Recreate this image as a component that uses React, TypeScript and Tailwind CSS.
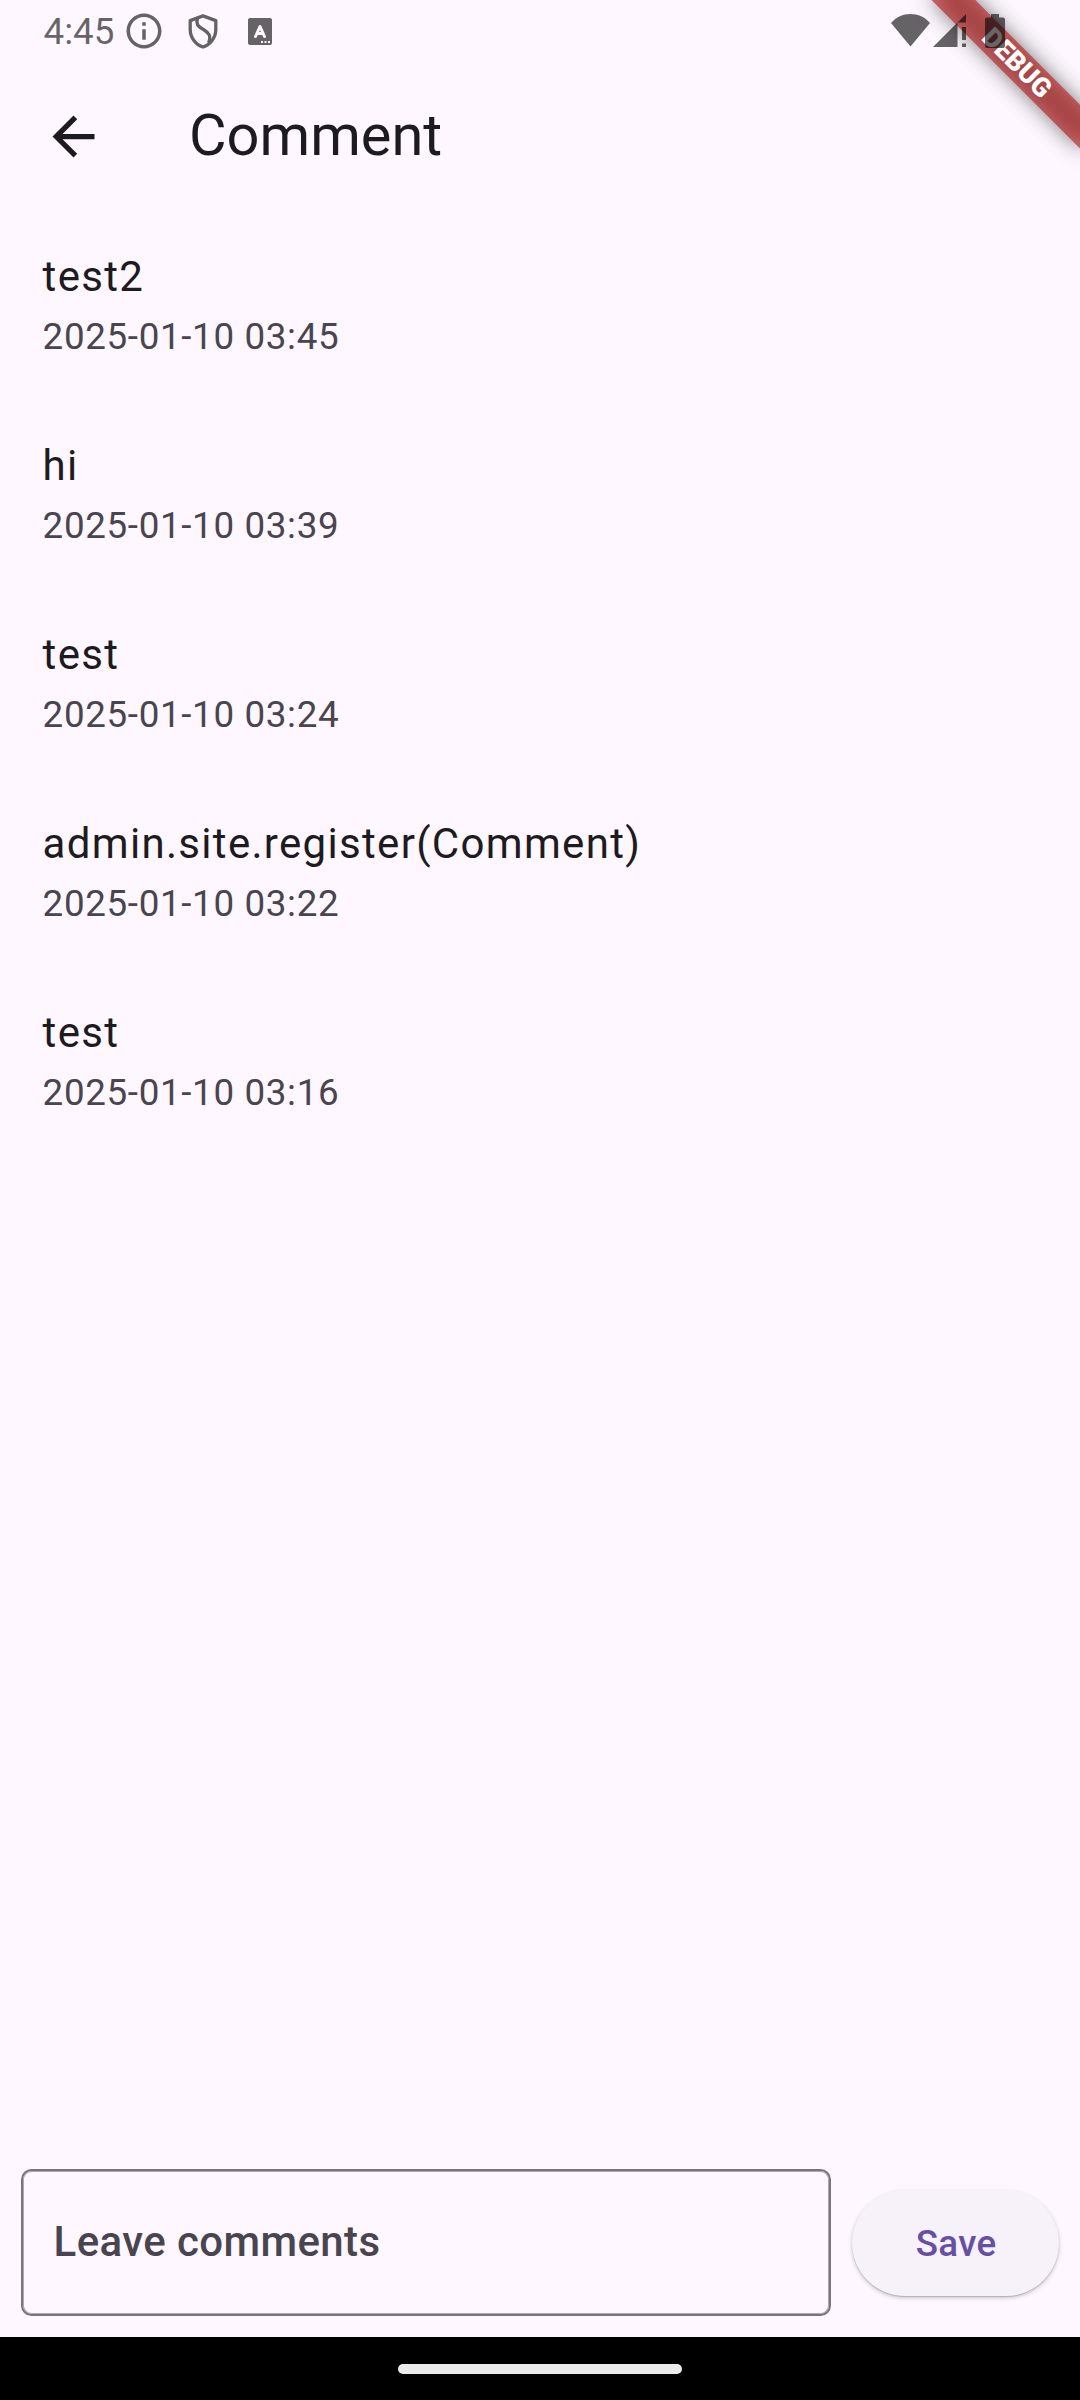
const comments = [
  { text: "test2", date: "2025-01-10 03:45" },
  { text: "hi", date: "2025-01-10 03:39" },
  { text: "test", date: "2025-01-10 03:24" },
  { text: "admin.site.register(Comment)", date: "2025-01-10 03:22" },
  { text: "test", date: "2025-01-10 03:16" },
];

function DebugBanner() {
  return (
    <div className="absolute top-0 right-0 h-60 w-60 overflow-hidden">
      <div className="absolute top-0 left-full h-0 w-0 origin-top-left rotate-45">
        <div className="absolute top-[73.5px] -left-[105px] flex h-[31.5px] w-[210px] items-center justify-center bg-[#b71c1ca0]">
          <div className="absolute inset-0 -z-10 bg-black/50 blur-[10.4px]" />
          <span className="text-[26.775px] leading-none font-black text-white">DEBUG</span>
        </div>
      </div>
    </div>
  );
}

function StatusBar() {
  return (
    <div className="relative flex h-[63px] shrink-0 text-black/60">
      <span className="mt-[10px] ml-[43.5px] w-[79.5px] text-[36.75px] leading-[43px]">4:45</span>
      <svg className="mt-[10px] h-[42px] w-[42px]" viewBox="0 0 24 24" fill="currentColor">
        <path d="M11 7h2v2h-2zm0 4h2v6h-2zm1-9C6.48 2 2 6.48 2 12s4.48 10 10 10 10-4.480 10-10S17.520 2 12 2zm0 18c-4.410 0-8-3.590-8-8s3.590-8 8-8 8 3.590 8 8-3.590 8-8 8z" />
      </svg>
      <svg className="mt-[14px] ml-[22.5px] h-[35px] w-[30px] text-black opacity-60" viewBox="0 0 30 35" fill="none" stroke="currentColor" strokeWidth="3.3" strokeLinejoin="round">
        <path d="M15 1.900 L2.200 6.600 V15.500 C2.200 23.500 7.800 30.800 15 33 C22.200 30.800 27.800 23.500 27.800 15.500 V6.600 Z" />
        <path d="M9.500 4 C7.500 11 11 13 15.500 15.500 C21 19 23.500 22 20.500 29" />
      </svg>
      <svg className="mt-[18px] ml-[30.500px] h-[27px] w-6" viewBox="0 0 24 27">
        <rect width="24" height="27" rx="2" fill="currentColor" />
        <path d="M7.500 18.500 L12 8.500 L16.500 18.500 M9 15.500 H15" fill="none" stroke="#fef7ff" strokeWidth="3" strokeLinecap="round" strokeLinejoin="round" />
        <path d="M13 23h2v2h-2z M16.500 23h2v2h-2z M20 23h2v2h-2z" fill="#fef7ff" />
      </svg>
      <svg className="mt-[14px] ml-auto h-[33px] w-[39px]" viewBox="0 0 39 33" fill="currentColor">
        <path d="M19.500 32.500 L0 9 C5 3 12 0 19.500 0 S34 3 39 9 Z" />
      </svg>
      <svg className="mt-[14px] ml-[3px] h-[33px] w-[33px]" viewBox="0 0 33 33" fill="currentColor">
        <path d="M0 33 L24.500 8.500 V33Z M24.500 8.500 L33 0 V8.500Z M29 13h4v13h-4z M29 29.500h4v3.500h-4z" />
      </svg>
      <svg className="mt-[14px] mr-[75px] ml-[19px] h-[34px] w-5" viewBox="0 0 20 34" fill="currentColor">
        <path d="M6 0h8v3.500h4a2 2 0 0 1 2 2V32a2 2 0 0 1-2 2H2a2 2 0 0 1-2-2V5.500a2 2 0 0 1 2-2h4z" />
      </svg>
    </div>
  );
}

export default function App() {
  return (
    <div className="relative isolate flex h-[2400px] w-[1080px] flex-col overflow-hidden bg-[#fef7ff] font-[Roboto,sans-serif] text-[#1d1b20]">
      <DebugBanner />
      <StatusBar />
      <header className="flex h-[147px] shrink-0 items-center">
        <svg className="ml-[42px] h-[63px] w-[63px]" viewBox="0 0 24 24" fill="currentColor">
          <path d="M20 11H7.830l5.590-5.590L12 4l-8 8 8 8 1.410-1.410L7.830 13H20v-2z" />
        </svg>
        <h1 className="mb-1 ml-[84px] text-[57.75px] leading-[74px]">Comment</h1>
      </header>
      <ul className="grow pt-[21px]">
        {comments.map((c) => (
          <li key={c.date} className="flex h-[189px] flex-col px-[42.6px] pt-[14px]">
            <p className="text-[42px] leading-[63px] tracking-[1.3125px]">{c.text}</p>
            <p className="mt-[3px] text-[36.75px] leading-[52px] tracking-[0.656px] text-[#49454f]">{c.date}</p>
          </li>
        ))}
      </ul>
      <div className="flex items-center gap-[21px] p-[21px]">
        <div className="flex h-[147px] w-[810px] items-center rounded-[10.5px] border-2 border-[#79747e] pb-0.5 pl-[30.600px] text-[42px] font-medium tracking-[0.39px] text-[#49454f] shadow-[inset_0_0_0_1px_#79747e99]">
          Leave comments
        </div>
        <button className="h-[106px] w-[207px] rounded-full bg-[#f7f2fa] pt-0.5 pl-[1.2px] text-[36.75px] font-medium tracking-[0.2625px] text-[#6750a4] shadow-[0_1px_1px_rgba(0,0,0,0.16),0_2px_4px_rgba(0,0,0,0.2)]">
          Save
        </button>
      </div>
      <div className="flex h-[63px] shrink-0 justify-center bg-black pt-[27px]">
        <div className="h-[10px] w-[284px] rounded-full bg-[#ececec]" />
      </div>
    </div>
  );
}
